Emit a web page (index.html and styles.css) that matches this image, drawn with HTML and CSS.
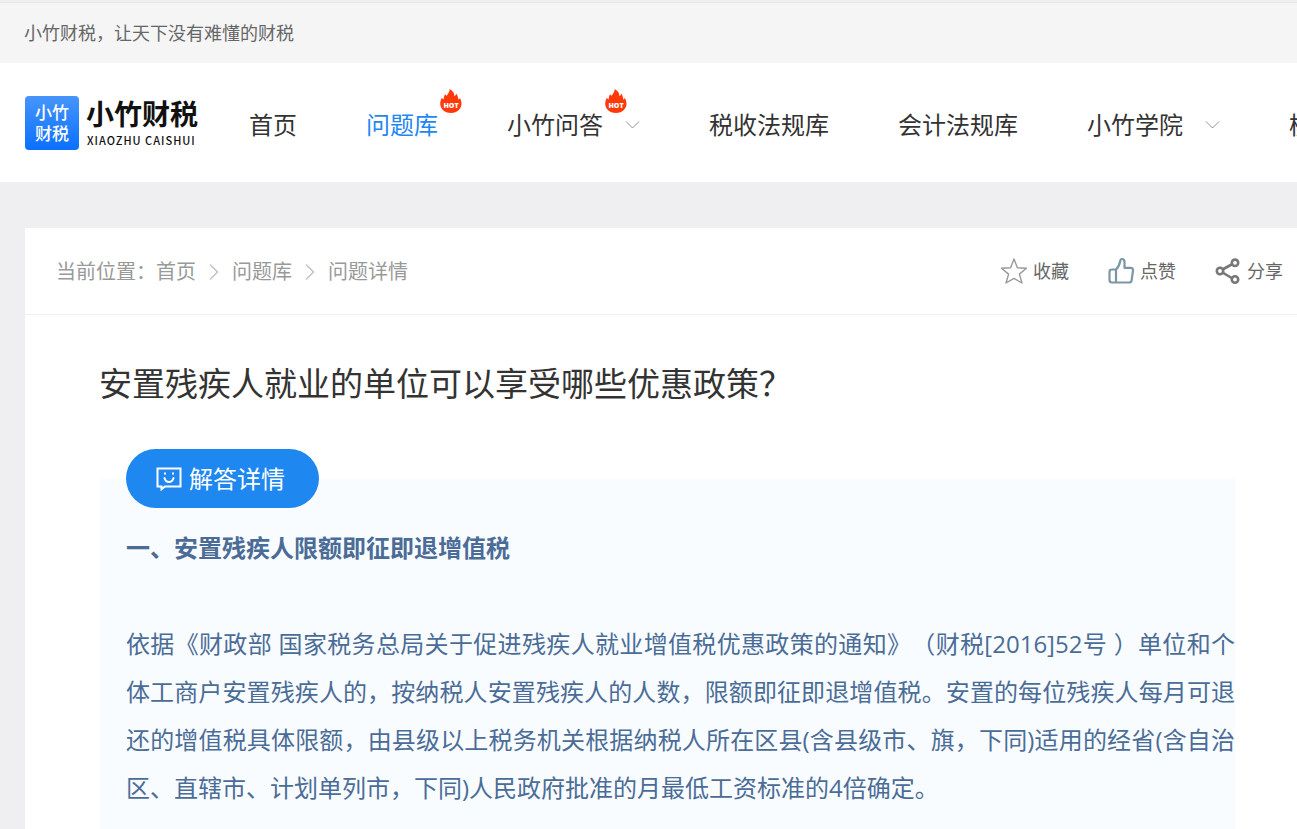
FILE: index.html
```html
<!DOCTYPE html>
<html lang="zh-CN">
<head>
    <meta charset="UTF-8">
    <meta name="viewport" content="width=device-width, initial-scale=1.0">
    <title>安置残疾人就业的单位可以享受哪些优惠政策？</title>
    <link rel="stylesheet" href="styles.css">
</head>
<body>

    <svg class="sprite" aria-hidden="true">
        <symbol id="icon-flame" viewBox="0 0 22 24">
            <path fill="#ff3a0a" d="M9.6 0C12.8 1.6 14.4 4.2 14.5 7.3C15.4 6.8 15.9 5.8 16 4.5C17.6 6 18.1 8.200 18.300 10.600C19 10.300 19.500 9.700 19.800 9C21.300 11.300 21.800 14 21.300 16.500C20.300 21 16.300 24 11 24C5.500 24 1.300 21 .4 16.500C-.1 13.500 .5 11 2 8.800C2.300 9.700 2.800 10.200 3.600 10.500C3.700 8.300 4.200 6.500 5.300 5.200C5.600 6 6.100 6.500 6.800 6.700C7.500 4.600 9.800 3.200 9.600 0Z"/>
        </symbol>
        <symbol id="icon-down" viewBox="0 0 15 10">
            <path fill="none" stroke="#909399" d="M1 1.500L7.500 8L14 1.500"/>
        </symbol>
        <symbol id="icon-right" viewBox="0 0 10 18">
            <path fill="none" stroke="#c0c4cc" stroke-width="1.500" d="M1 1.500L8.500 9L1 16.500"/>
        </symbol>
    </svg>

    <div class="topbar">小竹财税，让天下没有难懂的财税</div>

    <header class="header">
        <a class="logo" href="#">
            <span class="logo-mark"><span>小竹</span><span>财税</span></span>
            <span class="logo-name">
                <span class="logo-cn">小竹财税</span>
                <span class="logo-en">XIAOZHU CAISHUI</span>
            </span>
        </a>
        <nav class="nav">
            <a href="#">首页</a>
            <a class="active" href="#">问题库<svg class="hot" viewBox="0 0 22 24"><use href="#icon-flame"/><text x="11" y="19" text-anchor="middle">HOT</text></svg></a>
            <div class="nav-group">
                <a href="#">小竹问答<svg class="hot" viewBox="0 0 22 24"><use href="#icon-flame"/><text x="11" y="19" text-anchor="middle">HOT</text></svg></a>
                <svg class="down"><use href="#icon-down"/></svg>
            </div>
            <a href="#">税收法规库</a>
            <a href="#">会计法规库</a>
            <div class="nav-group">
                <a href="#">小竹学院</a>
                <svg class="down"><use href="#icon-down"/></svg>
            </div>
            <a href="#">模板</a>
        </nav>
    </header>

    <main class="card">
        <div class="card-head">
            <div class="crumbs">
                <span>当前位置：</span>
                <a href="#">首页</a>
                <svg><use href="#icon-right"/></svg>
                <a href="#">问题库</a>
                <svg><use href="#icon-right"/></svg>
                <span>问题详情</span>
            </div>
            <div class="actions">
                <button type="button">
                    <svg viewBox="0 0 28 28" fill="none" stroke="#999" stroke-width="1.400" stroke-linejoin="round">
                        <path d="M14 2L17.400 10.800L26.500 11.200L19.400 17.100L22 26L14 21.400L6 26L8.600 17.100L1.500 11.200L10.600 10.800Z"/>
                    </svg>
                    收藏
                </button>
                <button type="button">
                    <svg viewBox="0 0 28 28" fill="none" stroke="#7b96a5" stroke-width="2.200" stroke-linejoin="round" stroke-linecap="round">
                        <path d="M9 12.500H5Q2.500 12.500 2.500 15V23Q2.500 25.500 5 25.500H22Q24.200 25.500 24.600 23.500L26 13.500Q26.200 10.800 23.500 10.800H17.500V5Q17.500 2 14.800 2Q13.500 2 13.200 4Q12.300 9.500 9 12.500ZM9 12.500V25"/>
                    </svg>
                    点赞
                </button>
                <button type="button">
                    <svg viewBox="0 0 28 28" fill="none" stroke="#777" stroke-width="2.600">
                        <path d="M8.500 12.500L18.500 7M8.500 15.500L18.500 21.500"/>
                        <circle cx="6" cy="14" r="3.200"/>
                        <circle cx="21" cy="5.800" r="3.200"/>
                        <circle cx="21" cy="22.500" r="3.200"/>
                    </svg>
                    分享
                </button>
            </div>
        </div>

        <article class="question">
            <h1>安置残疾人就业的单位可以享受哪些优惠政策？</h1>
            <section class="answer">
                <h2 class="answer-tag">
                    <svg viewBox="0 0 26 24" fill="none" stroke="#fff" stroke-width="2">
                        <path d="M1.500 1.500H24.500V19.500H9L5.500 22.300V19.500H1.500Z"/>
                        <path stroke-linecap="round" d="M8.500 11Q9.500 15 13 15Q16.500 15 17.500 11"/>
                        <path d="M8 6.500H10M16 6.500H18"/>
                    </svg>
                    解答详情
                </h2>
                <h3>一、安置残疾人限额即征即退增值税</h3>
                <p>依据《财政部 国家税务总局关于促进残疾人就业增值税优惠政策的通知》（财税[2016]52号 ）单位和个体工商户安置残疾人的，按纳税人安置残疾人的人数，限额即征即退增值税。安置的每位残疾人每月可退还的增值税具体限额，由县级以上税务机关根据纳税人所在区县(含县级市、旗，下同)适用的经省(含自治区、直辖市、计划单列市，下同)人民政府批准的月最低工资标准的4倍确定。</p>
            </section>
        </article>
    </main>

</body>
</html>
```
FILE: styles.css
```css
* { box-sizing: border-box; }
body { margin: 0; background: #efeff1; color: #333; font-family: "Open Sans", "Noto Sans CJK SC", sans-serif; text-spacing-trim: space-all; overflow: hidden; }
a { color: inherit; text-decoration: none; }
h1, h2, h3, p { margin: 0; }
svg { flex: none; }
.sprite { position: absolute; width: 0; height: 0; }

.topbar { margin-top: 2px; border-top: 1px solid #e8e8e8; background: #f5f5f5; color: #666; padding: 0 24px; font-size: 18px; line-height: 60px; }

.header { display: flex; align-items: center; height: 119px; padding: 0 25px; background: #fff; white-space: nowrap; }
.logo { display: flex; align-items: center; gap: 7px; width: 224px; flex: none; color: #111; }
.logo-mark { display: flex; flex-direction: column; align-items: center; justify-content: center; width: 54px; height: 54px; border-radius: 4px; background: linear-gradient(#4795fb, #0a70fe); color: #fff; font-size: 17px; font-weight: 500; line-height: 21px; }
.logo-name { display: flex; flex-direction: column; }
.logo-cn { font-size: 28px; font-weight: 700; line-height: 34px; }
.logo-en { padding-left: 1px; font-family: "Noto Sans CJK SC", sans-serif; font-size: 11px; font-weight: 500; line-height: 18px; letter-spacing: 1px; }

.nav { display: flex; align-items: center; gap: 69px; padding-top: 4px; font-size: 24px; line-height: 36px; }
.nav a { position: relative; flex: none; }
.nav .active { color: #1e87f0; }
.nav-group { display: flex; align-items: center; gap: 22px; flex: none; }
.hot { position: absolute; left: 100%; top: -18px; width: 22px; height: 24px; margin-left: 2px; }
.hot text { fill: #fff; font-family: "Open Sans", sans-serif; font-size: 7px; font-weight: 800; }
.down { width: 15px; height: 10px; }

.card { margin: 46px 0 0 25px; background: #fff; }
.card-head { display: flex; align-items: center; justify-content: space-between; height: 87px; padding: 0 14px 0 31px; border-bottom: 1px solid #efeff1; }
.crumbs { display: flex; align-items: center; padding-top: 2px; color: #999; font-size: 20px; line-height: 30px; }
.crumbs svg { width: 10px; height: 18px; margin: 0 13px; }
.actions { display: flex; gap: 38px; }
.actions button { display: flex; align-items: center; gap: 5px; padding: 0; border: 0; background: none; color: #666; font: inherit; font-size: 18px; line-height: 28px; cursor: pointer; }
.actions svg { width: 28px; height: 28px; }

.question { padding: 44px 62px 0 74px; }
.question h1 { font-size: 33px; font-weight: 400; line-height: 50px; }
.answer { margin: 70px 0 0 1px; padding: 0 0 40px 26px; background: #f8fcff; color: #4b6c97; font-size: 24px; line-height: 48px; }
.answer-tag { display: inline-flex; align-items: center; gap: 7px; position: relative; top: -30px; height: 59px; padding: 0 34px 0 30px; border-radius: 30px; background: #1e87f0; color: #fff; font-size: 24px; font-weight: 400; vertical-align: top; }
.answer-tag svg { width: 26px; height: 24px; }
.answer h3 { margin: -14px 0 48px; font-size: 24px; font-weight: 700; }
.answer p { text-align: justify; }
```
